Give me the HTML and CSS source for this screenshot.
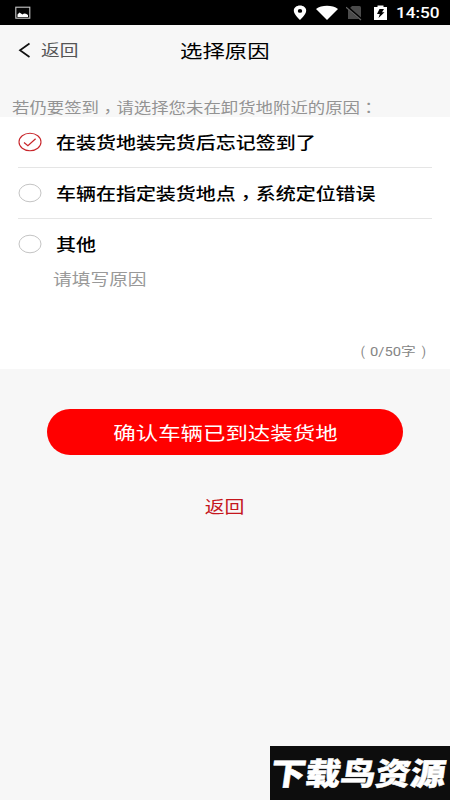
FILE: index.html
```html
<!DOCTYPE html>
<html lang="zh-CN">
<head>
<meta charset="utf-8">
<title>选择原因</title>
<link rel="stylesheet" href="styles.css">
</head>
<body>
<div class="status">
  <svg class="s-photo" width="16" height="14" viewBox="0 0 16 14"><rect x=".8" y="1.200" width="14" height="11" fill="#050505" stroke="#c9c9c9" stroke-width="1.1"/><path d="M2.500 11V8.500l2-2 1.500 1 1.500 1L9 7.500l2 .2L13 9v2z" fill="#fff"/></svg>
  <div class="s-right">
    <svg width="14" height="16" viewBox="0 0 14 16"><path fill="#fff" fill-rule="evenodd" d="M7 .5c-3.500 0-6.200 2.200-6.200 5.200C.8 9.300 7 15 7 15s6.200-5.700 6.200-9.300C13.200 2.700 10.500.5 7 .5zM7 4a2.200 1.900 0 1 1 0 3.800A2.200 1.900 0 0 1 7 4z"/></svg>
    <svg class="s-wifi" width="22" height="16" viewBox="0 0 22 16"><path fill="#fff" d="M0 4C5.500-.2 16.500-.2 22 4L11 15z"/></svg>
    <svg class="s-sim" width="17" height="16" viewBox="0 0 17 16"><path fill="#4b4b4b" d="M6 1h7.500q1.500 0 1.500 1.500V14H2V5z"/><path d="M.5 1.500L16 15" stroke="#000" stroke-width="2.600"/><path d="M0 2.300L15 15" stroke="#666" stroke-width="1.200"/></svg>
    <svg class="s-batt" width="13" height="16" viewBox="0 0 13 16"><path fill="#fff" d="M0 2h3.500V.5h6V2H13v13H0z"/><path fill="#000" d="M5.500 4H10L8 7.200h2.500L4.500 13l1.300-4H3z"/></svg>
    <span class="clock">14:50</span>
  </div>
</div>
<header class="nav">
  <svg class="chev" width="13" height="17" viewBox="0 0 13 17"><path d="M11.500 1.500L2 8.300l9.500 6.700" fill="none" stroke="#111" stroke-width="1.700"/></svg>
  <span class="wide back">返回</span>
  <h1 class="wide title">选择原因</h1>
</header>
<p class="hint"><span class="wide">若仍要签到<i class="comma" lang="zh-TW">，</i>请选择您未在卸货地附近的原因<i class="colon" lang="zh-TW">：</i></span></p>
<main class="panel">
  <div class="row">
    <svg class="radio" width="24" height="20" viewBox="0 0 24 20"><ellipse cx="12" cy="10" rx="11" ry="8.800" fill="#fff" stroke="#c8262b" stroke-width="1.100"/><path d="M6 10.500l3.900 3.300 7.700-7.100" fill="none" stroke="#c8262b" stroke-width="1.200"/></svg>
    <span class="wide">在装货地装完货后忘记签到了</span>
  </div>
  <div class="row">
    <svg class="radio" width="24" height="20" viewBox="0 0 24 20"><ellipse cx="12" cy="10" rx="11" ry="8.800" fill="#fff" stroke="#c4c4c4"/></svg>
    <span class="wide">车辆在指定装货地点<i class="comma" lang="zh-TW">，</i>系统定位错误</span>
  </div>
  <div class="row">
    <svg class="radio" width="24" height="20" viewBox="0 0 24 20"><ellipse cx="12" cy="10" rx="11" ry="8.800" fill="#fff" stroke="#c4c4c4"/></svg>
    <span class="wide">其他</span>
  </div>
  <div class="placeholder"><span class="wide">请填写原因</span></div>
  <div class="count"><span>(</span><span class="wide num">0/50字</span><span>)</span></div>
</main>
<div class="confirm"><span class="wide">确认车辆已到达装货地</span></div>
<div class="return"><span class="wide">返回</span></div>
<div class="mark"><span>下载鸟资源</span></div>
</body>
</html>
```

FILE: styles.css
```css
* { box-sizing: border-box; }
body {
  margin: 0;
  width: 450px;
  height: 800px;
  overflow: hidden;
  background: #f7f7f7;
  font-family: Roboto, "Noto Sans CJK SC", sans-serif;
  display: flex;
  flex-direction: column;
  color: #000;
}
svg { display: block; flex: none; }
.wide {
  display: inline-block;
  white-space: nowrap;
  transform: scaleX(1.2);
  transform-origin: left center;
}
/* Centred full-width punctuation, with the comma dropped to the baseline */
i { font-style: normal; line-height: 1; }
.comma, .colon { font-family: "Noto Sans CJK TC", sans-serif; }
.comma { position: relative; top: 4px; }

.status {
  height: 25px;
  flex: none;
  background: #000;
  display: flex;
  align-items: center;
  justify-content: space-between;
  padding: 0 10px 0 15px;
}
.s-right { display: flex; align-items: center; }
.s-wifi { margin-left: 9px; }
.s-sim { margin-left: 8px; }
.s-batt { margin-left: 11px; }
.clock {
  width: 44px;
  margin-left: 9px;
  padding-top: 2px;
  color: #fff;
  font-size: 15.5px;
  font-weight: 500;
  line-height: 23px;
  transform: scaleX(1.11);
  transform-origin: left center;
}

.nav {
  height: 50px;
  flex: none;
  display: flex;
  align-items: center;
  padding: 0 0 2px 18px;
}
.chev { margin-top: 2px; }
.back { width: 32px; margin-left: 10px; font-size: 15.6px; color: #555; }
.title { margin: 0 0 0 107px; font-size: 18.7px; font-weight: 400; }

.hint {
  height: 42px;
  flex: none;
  margin: 0;
  padding: 22px 0 0 12px;
  font-size: 14.5px;
  line-height: 24px;
  color: #939393;
}
.panel {
  height: 252px;
  flex: none;
  background: #fff;
  padding: 0 18px;
}
.row {
  height: 51px;
  display: flex;
  align-items: center;
  border-bottom: 1px solid #e5e5e5;
  font-size: 16.65px;
  font-weight: 500;
}
.row .wide { margin-left: 14px; }
.row:nth-child(3) { border-bottom: 0; padding-bottom: 2px; }
.placeholder { margin-top: -1px; padding-left: 35px; font-size: 15.6px; line-height: 22px; color: #999; }
.count {
  display: flex;
  justify-content: flex-end;
  gap: 5px;
  margin-top: 52px;
  padding-right: 6px;
  font-size: 12px;
  line-height: 18px;
  color: #858585;
}
.num { width: 47px; font-size: 12.3px; }

.confirm {
  width: 356px;
  height: 46px;
  flex: none;
  margin: 40px 0 0 47px;
  padding-bottom: 2px;
  border-radius: 23px;
  background: #f00;
  color: #fff;
  font-size: 18.7px;
  display: flex;
  align-items: center;
  justify-content: center;
}
.confirm .wide, .return .wide { transform-origin: center; }
.return {
  margin-top: 41px;
  height: 24px;
  flex: none;
  line-height: 24px;
  text-align: center;
  font-size: 16.6px;
  color: #c5161d;
}
.mark {
  width: 180px;
  height: 54px;
  flex: none;
  margin: auto 0 0 auto;
  background: #0d0d0d;
  color: #fff;
  display: flex;
  align-items: center;
  padding: 0 0 4px 1px;
}
.mark span {
  font-size: 31px;
  font-weight: 900;
  white-space: nowrap;
  -webkit-text-stroke: .5px #fff;
  transform: scaleX(1.13) skewX(-7deg);
  transform-origin: left center;
}
```
